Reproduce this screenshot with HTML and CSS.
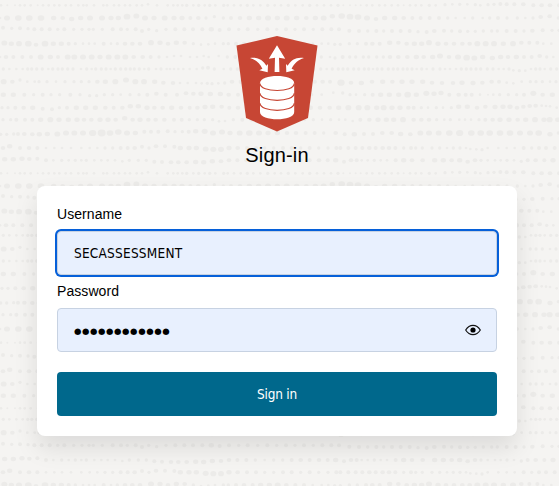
FILE: index.html
```html
<!DOCTYPE html>
<html lang="en">
<head>
<meta charset="utf-8">
<title>Sign-in</title>
<link rel="stylesheet" href="styles.css">
</head>
<body>
<svg class="texture" id="texture" viewBox="0 0 1677 1458" aria-hidden="true"></svg>
<main class="page">
  <svg class="logo" viewBox="0 0 82 96" aria-hidden="true">
    <path fill="#c74634" d="M41 0 81.500 9.500 72 82 41 95.500 10 82 .5 9.500Z"/>
    <path fill="#fff" d="M41 9.200 49.200 22.700 43 21.700 43.400 36h-4.800L39 21.700 32.800 22.700ZM14 22c7.500-1.200 13 1.800 16.300 7.800L32 28 31.700 36.200 23.300 34.300 26.400 32.700C23.700 27.300 20 23.700 14 22ZM68 22c-7.500-1.200-13 1.800-16.300 7.800L50 28 50.300 36.200 58.700 34.300 55.600 32.700C58.300 27.300 62 23.700 68 22Z"/>
    <path fill="#fff" d="M24 47.300C24 37.600 58.200 37.600 58.200 47.300v28.700c0 9.700-34.200 9.700-34.200 0Z"/>
    <path fill="none" stroke="#c74634" stroke-width="1.200" d="M24 47.500c0 9.300 34.200 9.300 34.200 0M24 57.300c0 9.300 34.200 9.300 34.200 0M24 67.300c0 9.300 34.200 9.300 34.200 0"/>
  </svg>
  <h1 class="title">Sign-in</h1>
  <form class="card">
    <label class="label">Username</label>
    <div class="field field-focused"><span class="value">SECASSESSMENT</span></div>
    <label class="label label-password">Password</label>
    <div class="field">
      <span class="mask">●●●●●●●●●●●●</span>
      <svg class="eye" viewBox="0 0 16 12" aria-hidden="true">
        <path fill="none" stroke="#111" stroke-width="1.200" d="M.7 6C4.500-.2 11.500-.2 15.300 6 11.500 12.200 4.500 12.200.7 6Z"/>
        <circle cx="8" cy="6" r="2.600" fill="#000"/>
      </svg>
    </div>
    <button class="submit" type="button">Sign in</button>
  </form>
</main>
<script src="texture.js"></script>
</body>
</html>
```

FILE: texture.js
```js
// Each row: baseline, then dots as "x:radius" or "x:radius:vertical shift".
const rows = [
  [16, "3:4 22:3 45:3 60:4 74:4 92:4 113:3 129:4 146:4 163:4 178:4 197:4 213:4 235:4 250:4 260:4 282:4 310:4 321:4 342:4 357:4 375:4 390:4 410:4 426:4 444:4:-3 471:4 503:4 520:4 533:4 547:4 560:5 580:4 596:5 614:4 629:5 646:4 671:5 683:4 702:4 722:4 742:5 760:4 781:4 803:5 824:4 843:4 865:5 886:4 908:4 929:5 951:4 972:4 993:4 1014:5 1030:3 1050:3 1067:3 1082:3 1100:4 1117:4 1138:4 1155:4 1175:4 1194:4 1211:3 1230:4 1247:4 1264:4 1288:5 1307:4 1335:5:-2 1357:4:-3 1379:5:-3 1402:4:-3 1426:5:-2 1441:4 1464:5:-2 1482:5:-3 1501:6:-4 1520:6:-3 1543:6:-3 1570:7:-3 1600:6 1625:7 1650:7 1677:6"],
  [54, "0:4 21:9 55:10 88:10 123:10 161:8 188:7 215:8:3 242:8 270:9 306:9 333:8 355:8 381:10:-4 409:9:-6 435:9 462:8 494:9 522:8 546:8 571:6 595:7 618:5 643:5:-4 670:5 693:6 720:7 748:8 776:8 804:9 832:8 860:9 890:8 919:7 946:8 971:9 997:8:-5 1025:10:-6 1050:10:-4 1074:10:-3 1101:9 1128:7:3 1154:8 1184:8 1211:7 1237:6 1262:6 1289:6 1317:6 1343:5 1367:4 1394:4 1418:5 1448:4 1469:5 1494:6 1521:5 1552:5 1576:4 1599:5 1622:7:-3 1649:7:-5 1675:5"],
  [88, "9:6:-5 35:5:-3 60:6:-3 84:5:-2 103:6 125:6 149:6 173:5 193:6 221:5 246:5 267:5 280:5 307:5 338:6 363:6 382:5 407:6 426:6:5 446:5 470:5:4 498:5 526:6 553:6 579:6 607:6 634:8 659:6:2 687:6 716:5 743:6 773:5 802:6 830:5 858:6 885:5 912:6 940:5 967:6 994:6 1017:6 1048:6:4 1077:6:5 1103:5:5 1129:6:5 1151:5:5 1176:6:5 1202:6:5 1229:6:5 1254:5:7 1280:6:8 1303:7:5 1332:6:4 1355:5:5 1380:6:6 1403:5:6 1426:5:6 1450:5:5 1475:5:5 1492:5:5 1520:6:5 1547:6:5 1572:5:5 1597:7:4 1628:6:3 1656:5:3 1677:5:3"],
  [131, "13:9:-2 34:8 57:9 85:10 108:7:3 135:10 160:8 184:8 206:6 226:5 249:4 267:4 284:4 311:6 333:4 352:5 375:7 397:7 420:7 453:9:-3 480:8:-3 504:7 529:8:-3 554:7:-3 580:5 603:4:3 625:4:2 645:4 670:5 685:5 708:6 732:7 758:6 782:8 808:8 833:9 859:7 886:6 912:6 938:4 965:4 985:4 1004:5:2 1021:5:2 1048:5 1072:5 1098:6 1117:7 1139:6 1169:8:-3 1195:7:-3 1220:7 1243:8 1265:8 1287:9:-3 1314:8 1338:7 1362:7 1387:7 1409:7 1432:9 1457:9 1482:9 1510:8 1539:9 1564:7:-3 1588:6:-3 1612:6:-3 1630:4 1654:4"],
  [171, "0:4 18:7 40:6 67:6 93:6 122:9 151:8 174:6 203:9 223:9 249:9 275:9 300:8 326:9 352:9 376:9 401:7 428:7 452:6 477:5 501:4 522:4:-3 543:4:-3 570:4 591:4 611:4:-3 626:4 656:4:-3 682:5 706:6 731:6 758:8 785:8 810:9 836:9 864:7 889:7 916:6 939:4 964:5 990:4 1005:5:3 1028:6 1049:5 1067:5 1090:5 1106:5 1130:5 1150:5 1170:7 1195:7 1222:7 1249:8 1271:7 1298:8 1320:9:-3 1347:7 1374:9 1400:10:2 1423:9:3 1448:8 1477:8:3 1502:8 1524:7 1549:8 1572:6 1595:6 1619:7:-3 1640:5 1660:4"],
  [207, "10:5 28:4 49:4 68:4 83:5 95:5 110:5 127:5 145:4 158:5 174:5 187:5 203:5 219:5 243:4 260:5 275:4 287:5 304:5 318:5 332:4 346:5 362:5 377:5 391:5 403:5 418:5 433:4 446:5 468:4 483:5 500:4 510:4 522:4 535:4 550:4 569:4 590:4 608:5:-3 624:6:-4 643:5 671:4 692:5 712:5 732:5 752:4 773:5 794:5 815:4 836:5 857:5 878:4 899:5 920:5 941:4 962:5 980:4 997:5 1015:5 1029:5 1043:5 1061:5 1076:5 1093:5 1106:5 1119:4 1132:5 1146:5 1165:5 1180:5 1193:5 1209:5 1222:5 1236:5 1250:4 1265:5 1280:4 1299:5 1320:5 1335:4 1350:4 1368:4 1384:5 1399:5 1413:5 1428:5 1442:5 1462:5 1479:5 1496:4 1511:4 1527:5 1540:4:4 1558:5:5 1576:4:5 1593:4 1607:5 1620:5 1634:4 1652:5 1670:5"],
  [245, "11:9 37:7 60:5:-5 82:4 104:4 117:5 141:5 168:4 195:5 222:5 244:5 267:5 292:7 316:8 346:9 378:9:-5 406:9 432:9 464:8 490:7:3 519:7:4 540:4:4 563:4:4 588:4:4 605:4:5 622:5:5 636:5:6 655:4:5 674:5:4 696:7 724:8 752:7 780:8 806:9 834:8 862:7 891:7 918:8 944:7 968:7 990:6 1023:11:3 1053:7:3 1084:8:4 1116:7 1148:8 1177:7 1206:8 1236:8 1268:8 1296:7:3 1326:7:4 1359:7:4 1386:8:3 1419:8:4 1447:7:3 1475:7 1497:6 1520:4:3 1540:4:5 1565:4 1591:5 1608:5 1627:5 1650:4 1668:5"],
  [284, "10:8 40:8 73:6 101:5 128:6 153:5 179:5 211:6 240:5 269:5:3 290:5:3 313:5 338:5 362:4 390:5 417:5 442:6 469:7:-3 497:6 531:6 558:7:-4 580:7:-3 603:8:-3 631:8:-2 661:8:-2 686:7 714:6 742:5 770:6 797:7 826:7 851:6 880:5 908:5 935:5 965:4 1000:4:-6 1028:5:-5 1050:5 1068:4 1094:5 1118:6 1142:8 1168:8 1196:8 1223:10 1249:8 1279:9:-4 1302:8:-3 1323:8:-5 1348:6 1376:7 1397:6 1415:6 1440:4 1464:3 1480:4 1499:5 1525:5 1550:5 1572:6 1600:9:-4 1628:7 1657:8"],
  [323, "6:5 24:5 46:6 71:7 98:8 128:6:3 156:6:5 178:5 201:6 229:8 257:8 286:8 316:7 341:6 367:7 391:8:-4 415:8:-4 441:8 463:7 488:7 515:8 543:7 569:6 592:7 615:8:-2 638:8:-3 665:7:-3 688:6 714:7 741:7 769:6 795:7 822:8 850:9 877:8 904:7 931:8 960:7 989:7 1016:8 1045:9 1076:9 1102:9 1130:8 1151:9 1176:8 1200:8 1225:7 1241:6 1264:5 1284:4 1309:5 1329:4 1354:5 1376:8:-3 1402:8:-3 1431:7 1456:7:-3 1485:8:-2 1509:8:-3 1530:8:-3 1551:7 1570:7:-3 1589:7:-5 1607:7:-6 1625:4:-6 1638:4:-5 1650:4:-4 1670:4"],
  [359, "9:5 32:5 49:6 75:6 97:6 122:8 151:9 177:8 205:8 231:8 252:7 274:7 300:8 324:8 347:7 374:8:-4 398:7 420:8 445:7 467:7 493:7 522:6 545:6 568:5 592:5 613:5 638:5 657:4:5 675:4:4 700:5 727:6 755:7 782:8 808:8 836:7 862:7 888:6 914:5 940:5 966:4 992:5 1017:4 1036:4 1058:4:4 1081:6 1108:7 1134:8 1159:8 1181:8 1209:9 1241:7 1264:7 1287:7 1310:5 1333:4 1351:5 1378:4 1395:4 1413:4 1437:5 1456:6 1478:7 1500:8 1527:8 1553:7 1577:8 1605:9 1632:8 1649:9 1673:8"],
  [399, "2:5:4 20:5:4 41:5:3 54:6:3 73:7:3 97:7:4 118:8:4 142:8:3 172:9:3 198:9 223:9 249:9 278:11 305:12 330:10 355:10:-3 381:9 406:8 433:6:-4 453:6:-4 475:6:-4 503:6:-5 525:5:-4 547:5:-4 566:6:-4 587:8:-5 614:9:-5 639:9 666:9:-3 690:8 719:9 748:10 777:9 804:8 832:8 861:7 888:7 917:6 944:6 971:5 1007:7 1034:6:4 1063:8:4 1092:6:3 1119:6:3 1147:7 1175:7 1202:8:3 1231:7:4 1261:9 1287:9 1316:9 1348:10 1379:11 1414:10 1442:10 1469:10 1500:10 1530:10 1560:9 1590:9 1616:10 1650:8:4 1675:5"],
  [444, "9:7 29:8:-5 60:6 87:7 112:6 138:4 163:4 186:4 213:4 244:4 269:4 292:4 315:5 338:5 362:6 383:6 404:7 426:6:-4 447:5 468:7:-5 495:6:-5 523:6:-4 541:8 567:8 589:8 617:9:3 640:9:4 663:9:4 687:8 713:7 741:6 768:6 794:5 821:5 849:6 875:6 902:5 929:6 956:5 984:5 1009:6 1021:6 1045:6 1067:6 1087:6 1108:7 1127:6 1148:7 1167:7 1186:6 1211:5 1233:6 1247:5 1267:5 1296:5 1319:5 1341:4 1360:5 1380:5 1398:4 1411:4:3 1429:4:4 1446:5:5 1463:4 1495:4 1520:4 1544:4 1571:6 1595:5 1617:6 1638:6 1664:6"],
  [481, "14:8:-3 40:8:-3 66:8:-5 88:7:-4 112:6:-5 138:6 160:4 185:5 206:4 226:5 244:4 259:5 283:4 304:4 323:4 345:4 367:4:3 388:5 415:5 439:5 463:6:4 486:6:5 513:7:6 535:7:6 560:7:6 587:8:5 611:8:6 637:8:3 663:7:3 687:7 712:6 739:6 766:5 794:4 821:5 848:5 875:6 902:7 929:6 957:7 983:6 1007:8 1032:6:4 1053:7 1070:6 1085:4 1103:4 1123:5 1142:4 1161:4 1187:6 1211:8 1236:7 1268:7 1304:8 1330:8 1355:7 1379:8 1403:7:4 1425:7 1443:5 1463:4 1485:4 1502:4 1521:5 1542:4 1564:5:3 1583:6 1607:7 1633:6 1659:8"]
];

// The lower texture bands: baseline and index of the dot row they repeat.
const bands = [
  [520, 0], [558, 1], [593, 2], [635, 3], [676, 4], [706, 5], [747, 6],
  [783, 5], [822, 7], [865, 8], [905, 10], [944, 9], [987, 1], [1028, 0],
  [1070, 2], [1114, 11], [1152, 6], [1187, 7], [1225, 0], [1258, 5],
  [1298, 6], [1336, 2], [1380, 12], [1417, 11], [1455, 3]
];

const ns = "http://www.w3.org/2000/svg";
const texture = document.getElementById("texture");

function drawRow(y, dots) {
  for (const dot of dots.split(" ")) {
    const [x, r, shift = 0] = dot.split(":").map(Number);
    const el = document.createElementNS(ns, "ellipse");
    el.setAttribute("cx", x);
    el.setAttribute("cy", y + shift);
    el.setAttribute("rx", r);
    el.setAttribute("ry", r > 6 ? r * 0.85 : r);
    texture.append(el);
  }
}

for (const [y, dots] of rows) drawRow(y, dots);
for (const [y, index] of bands) drawRow(y, rows[index][1]);
```

FILE: styles.css
```css
* { box-sizing: border-box; }

body {
  margin: 0;
  height: 486px;
  overflow: hidden;
  background: #f5f4f2;
  color: #000;
  font-family: "Liberation Sans", Arial, sans-serif;
}

.texture {
  position: absolute;
  inset: 0;
  width: 559px;
  height: 486px;
  fill: #ecebe9;
}

.page {
  position: relative;
  display: flex;
  flex-direction: column;
  align-items: center;
  padding-top: 36px;
  padding-right: 5px;
}

.logo { width: 82px; height: 96px; }

.title {
  margin: 11px 0 19px;
  font-size: 20px;
  line-height: 24px;
  font-weight: 400;
  letter-spacing: .15px;
}

.card {
  display: flex;
  flex-direction: column;
  width: 480px;
  height: 250px;
  padding: 20px;
  border-radius: 8px;
  background: #fff;
  box-shadow: 0 12px 24px rgba(0, 0, 0, .1);
}

.label {
  height: 25px;
  font-size: 14px;
  line-height: 17px;
  letter-spacing: .07px;
}

.label-password { margin-top: 8px; }

.field {
  display: flex;
  align-items: center;
  justify-content: space-between;
  height: 44px;
  padding: 0 15px 0 16px;
  border: 1px solid #c7d2e2;
  border-radius: 4px;
  background: #e8f0fe;
}

.field-focused { box-shadow: 0 0 0 2px #0660d9; }

.value {
  font: 13.500px/18px "DejaVu Sans Condensed", "DejaVu Sans", sans-serif;
  font-stretch: condensed;
  letter-spacing: .23px;
}

.mask {
  padding-top: 1px;
  font: 8.500px/12px "DejaVu Sans", sans-serif;
  letter-spacing: .6px;
}

.eye { width: 16px; height: 12px; }

.submit {
  height: 44px;
  margin-top: 20px;
  padding: 0;
  border: 0;
  border-radius: 4px;
  background: #00688c;
  color: #fff;
  font: 13.500px/18px "DejaVu Sans Condensed", "DejaVu Sans", sans-serif;
  font-stretch: condensed;
  letter-spacing: -.2px;
}
```
